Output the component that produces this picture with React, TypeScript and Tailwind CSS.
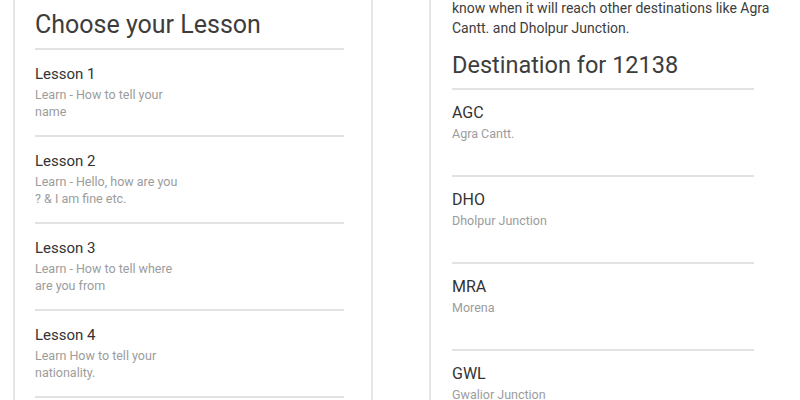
import React from "react";

const lessons = [
  { title: "Lesson 1", sub: "Learn - How to tell your name" },
  { title: "Lesson 2", sub: "Learn - Hello, how are you ? & I am fine etc." },
  { title: "Lesson 3", sub: "Learn - How to tell where are you from" },
  { title: "Lesson 4", sub: "Learn How to tell your nationality." },
];

const stations = [
  { code: "AGC", name: "Agra Cantt." },
  { code: "DHO", name: "Dholpur Junction" },
  { code: "MRA", name: "Morena" },
  { code: "GWL", name: "Gwalior Junction" },
];

export default function App() {
  return (
    <div
      className="h-[400px] w-[800px] overflow-hidden bg-white flex"
      style={{ fontFamily: "Roboto, 'Noto Sans', sans-serif" }}
    >
      <div className="ml-[13px] w-[360px] h-full border-x-2 border-[#e6e6e6] pl-[20px] pr-[27px] pt-[9px]">
        <h1 className="text-[25px] leading-[32px] text-[#3d3d3d] mb-[7px]">Choose your Lesson</h1>
        {lessons.map((l) => (
          <div key={l.title}>
            <div className="h-[2px] bg-[#e2e2e2]" />
            <div className="pt-[14px] pb-[15px]">
              <div className="text-[15px] leading-[20px] text-[#333]">{l.title}</div>
              <div className="mt-[2px] w-[145px] text-[12.5px] leading-[17px] text-[#9c9c9c]">{l.sub}</div>
            </div>
          </div>
        ))}
        <div className="h-[2px] bg-[#e2e2e2]" />
      </div>
      <div className="ml-[56px] flex-1 h-full border-l-2 border-[#e6e6e6] pl-[21px]">
        <div className="w-[330px] -mt-[2px]">
          <p className="text-[14px] leading-[20px] text-[#3d3d3d]">
            know when it will reach other destinations like Agra Cantt. and Dholpur Junction.
          </p>
        </div>
        <div className="w-[302px]">
          <h2 className="mt-[11px] text-[23.5px] leading-[32px] text-[#3d3d3d] mb-[7px]">Destination for 12138</h2>
          {stations.map((s) => (
            <div key={s.code}>
              <div className="h-[2px] bg-[#e2e2e2]" />
              <div className="pt-[13px] pb-[33px]">
                <div className="text-[16px] leading-[20px] text-[#333]">{s.code}</div>
                <div className="mt-[2px] text-[12.5px] leading-[17px] text-[#9c9c9c]">{s.name}</div>
              </div>
            </div>
          ))}
        </div>
      </div>
    </div>
  );
}
